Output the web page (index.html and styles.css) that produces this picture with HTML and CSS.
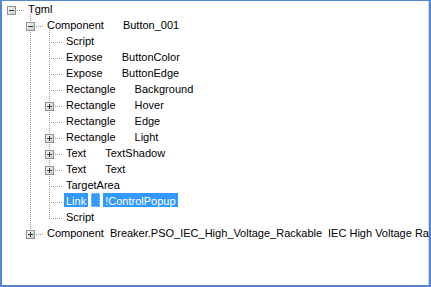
FILE: index.html
```html
<!DOCTYPE html>
<html lang="en">
<head>
    <meta charset="UTF-8">
    <title>Tgml tree</title>
    <link rel="stylesheet" href="styles.css">
</head>
<body>
    <div class="tree">
        <ul class="level root">
            <li>
                <div class="row"><span class="toggle minus"></span><span class="label">Tgml</span></div>
                <ul class="level">
                    <li>
                        <div class="row"><span class="toggle minus"></span><span class="label">Component</span><span class="blank"></span><span class="label value">Button_001</span></div>
                        <ul class="level">
                            <li><div class="row"><span class="spacer"></span><span class="label">Script</span></div></li>
                            <li><div class="row"><span class="spacer"></span><span class="label">Expose</span><span class="blank"></span><span class="label value">ButtonColor</span></div></li>
                            <li><div class="row"><span class="spacer"></span><span class="label">Expose</span><span class="blank"></span><span class="label value">ButtonEdge</span></div></li>
                            <li><div class="row"><span class="spacer"></span><span class="label">Rectangle</span><span class="blank"></span><span class="label value">Background</span></div></li>
                            <li><div class="row"><span class="toggle plus"></span><span class="label">Rectangle</span><span class="blank"></span><span class="label value">Hover</span></div></li>
                            <li><div class="row"><span class="spacer"></span><span class="label">Rectangle</span><span class="blank"></span><span class="label value">Edge</span></div></li>
                            <li><div class="row"><span class="toggle plus"></span><span class="label">Rectangle</span><span class="blank"></span><span class="label value">Light</span></div></li>
                            <li><div class="row"><span class="toggle plus"></span><span class="label">Text</span><span class="blank"></span><span class="label value">TextShadow</span></div></li>
                            <li><div class="row"><span class="toggle plus"></span><span class="label">Text</span><span class="blank"></span><span class="label value">Text</span></div></li>
                            <li><div class="row"><span class="spacer"></span><span class="label">TargetArea</span></div></li>
                            <li><div class="row selected"><span class="spacer"></span><span class="label">Link</span><span class="blank"></span><span class="label value">!ControlPopup</span></div></li>
                            <li><div class="row"><span class="spacer"></span><span class="label">Script</span></div></li>
                        </ul>
                    </li>
                    <li>
                        <div class="row"><span class="toggle plus"></span><span class="label">Component</span><span class="label tight">Breaker.PSO_IEC_High_Voltage_Rackable</span><span class="label tight">IEC High Voltage Rackable</span></div>
                    </li>
                </ul>
            </li>
        </ul>
    </div>
</body>
</html>
```

FILE: styles.css
```css
html, body {
    margin: 0;
    padding: 0;
    background: #fff;
}
.tree {
    width: 431px;
    height: 287px;
    box-sizing: border-box;
    overflow: hidden;
    border-style: solid;
    border-color: #5585d4;
    border-width: 1px 2px 2px 2px;
    box-shadow: inset -1px 0 #d9d9d9;
    padding-left: 5px;
    font-family: "Liberation Sans", Arial, sans-serif;
    font-size: 11px;
    color: #000;
}
ul {
    list-style: none;
    margin: 0;
    padding: 0;
}
.level .level {
    margin: -3px 0 0 19px;
    padding-top: 3px;
    background-image: repeating-linear-gradient(to bottom, #a0a0a0 0 1px, transparent 1px 2px);
    background-repeat: no-repeat;
    background-position: 4px 0;
    background-size: 1px calc(100% - 7px);
}
.row {
    display: flex;
    align-items: flex-start;
    height: 16px;
    white-space: nowrap;
    background-image: repeating-linear-gradient(to right, #a0a0a0 0 1px, transparent 1px 2px);
    background-repeat: no-repeat;
    background-position: 4px 9px;
    background-size: 13px 1px;
}
.toggle, .spacer {
    flex: none;
    width: 9px;
    height: 9px;
    margin: 5px 10px 0 0;
    box-sizing: border-box;
}
.toggle {
    border: 1px solid #919191;
    background-color: #e2e2e2;
    background-image: linear-gradient(#3a3a3a, #3a3a3a), linear-gradient(135deg, #fafafa, #c9c9c9);
    background-repeat: no-repeat;
    background-position: center, 0 0;
    background-size: 5px 1px, 100% 100%;
}
.toggle.plus {
    background-image: linear-gradient(#3a3a3a, #3a3a3a), linear-gradient(#3a3a3a, #3a3a3a), linear-gradient(135deg, #fafafa, #c9c9c9);
    background-position: center, center, 0 0;
    background-size: 5px 1px, 1px 5px, 100% 100%;
}
.label {
    flex: none;
    height: 14px;
    box-sizing: border-box;
    padding: 2px 2px 0;
    line-height: 12px;
}
.blank {
    flex: none;
    width: 9px;
    height: 14px;
    margin-left: 3px;
    box-sizing: border-box;
}
.value {
    margin-left: 3px;
}
.tight {
    margin-left: 2px;
}
.selected .label,
.selected .blank {
    background: #3399ff;
    color: #fff;
}
.selected .blank {
    border: 1px dotted #a8d0ff;
}
```
